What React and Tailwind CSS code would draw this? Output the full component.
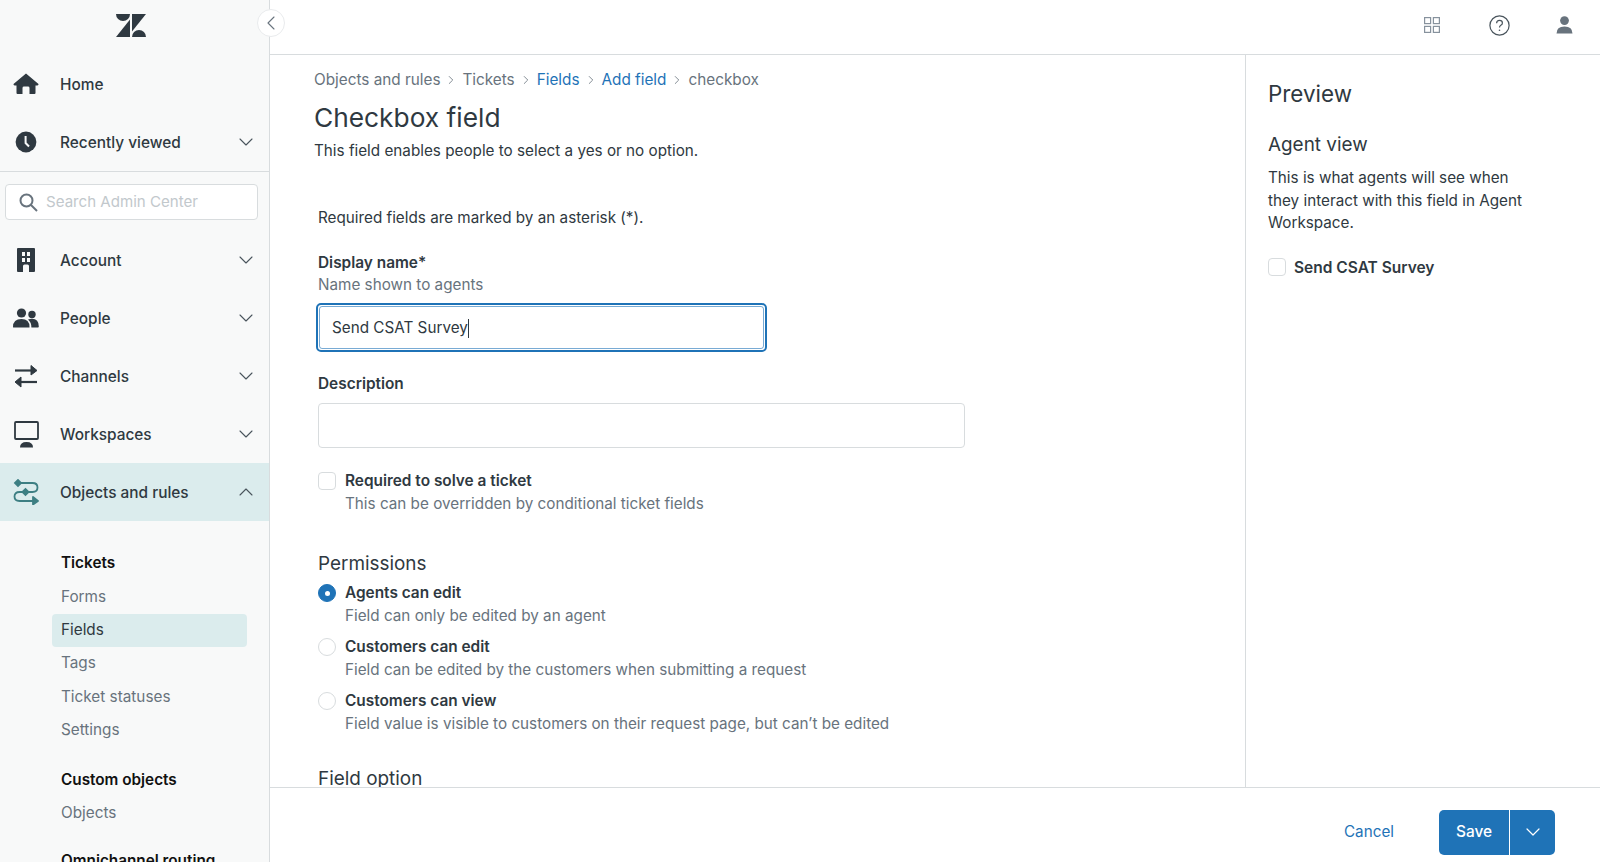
import React from 'react';
import { ChevronDown, ChevronUp, ChevronLeft, ChevronRight } from 'lucide-react';

// Iconos de la barra lateral
const HomeIcon = () => (
  <svg width="26" height="22" viewBox="0 0 26 22" fill="#2f3941">
    <path d="M13 0.5 L25.5 11 Q25.7 12.6 24 12.4 L22.5 12.4 L22.5 20 Q22.5 21 21.5 21 L16.5 21 L16.5 15 Q16.5 13.6 15 13.6 L11 13.6 Q9.5 13.6 9.5 15 L9.5 21 L4.5 21 Q3.5 21 3.5 20 L3.5 12.4 L2 12.4 Q0.3 12.6 0.5 11 Z" />
  </svg>
);
const ClockIcon = () => (
  <svg width="22" height="22" viewBox="0 0 22 22">
    <circle cx="11" cy="11" r="10.4" fill="#2f3941" />
    <path d="M10.6 5 V12 L14 15.5" fill="none" stroke="#f8f9f9" strokeWidth="2" />
  </svg>
);
const BuildingIcon = () => (
  <svg width="20" height="24" viewBox="0 0 20 24" fill="#2f3941">
    <path fillRule="evenodd" d="M1 1 Q1 0 2 0 L18 0 Q19 0 19 1 L19 23 Q19 24 18 24 L13 24 L13 18 Q13 16.5 11.5 16.5 L8.5 16.5 Q7 16.5 7 18 L7 24 L2 24 Q1 24 1 23 Z M6 4 V8 H9 V4 Z M11 4 V8 H14 V4 Z M6 10 V14 H9 V10 Z M11 10 V14 H14 V10 Z" />
  </svg>
);
const PeopleIcon = () => (
  <svg width="26" height="20" viewBox="0 0 26 20" fill="#2f3941">
    <circle cx="8.5" cy="5" r="4.6" />
    <circle cx="19" cy="6.5" r="3.7" />
    <path d="M0 19 Q0 11 8.5 11 Q16.5 11 16.5 19 L16.5 19.6 L0.8 19.6 Q0 19.6 0 19 Z" />
    <path d="M15 11.4 Q17 10.8 19 10.8 Q25.8 10.8 25.8 18.6 Q25.8 19.6 25 19.6 L18.4 19.6 Q18.6 14.4 15 11.4 Z" />
  </svg>
);
const ArrowsIcon = () => (
  <svg width="24" height="24" viewBox="0 0 24 24" fill="#2f3941" stroke="#2f3941">
    <path d="M1 6.5 H18" fill="none" strokeWidth="2.2" />
    <path d="M17 1.5 L23 6.5 L17 11 Z" strokeWidth="1" strokeLinejoin="round" />
    <path d="M23 18 H6" fill="none" strokeWidth="2.2" />
    <path d="M7 13 L1 18 L7 23 Z" strokeWidth="1" strokeLinejoin="round" />
  </svg>
);
const MonitorIcon = () => (
  <svg width="25" height="27" viewBox="0 0 25 27" fill="#2f3941">
    <rect x="1" y="1" width="23" height="17" rx="1" fill="none" stroke="#2f3941" strokeWidth="1.8" />
    <path d="M6 26.5 Q6 21 12.5 21 Q19 21 19 26.5 Z" />
  </svg>
);
const RulesIcon = () => (
  <svg width="26" height="26" viewBox="0 0 26 26" fill="none" stroke="#3d7f83" strokeWidth="1.8">
    <path d="M5 4 H19.5 Q24.5 4 24.5 8.5 Q24.5 13 19.5 13 H6.5 Q1.5 13 1.5 17.5 Q1.5 22 6.5 22 H21" />
    <path d="M2 4 L5 1 L8 4 L5 7 Z" fill="#3d7f83" />
    <path d="M9.5 13 L12.5 10 L15.5 13 L12.5 16 Z" fill="#3d7f83" />
    <path d="M20 18 L25 22 L20 25.5 Z" fill="#3d7f83" strokeLinejoin="round" />
  </svg>
);
const SearchIcon = () => (
  <svg width="19" height="19" viewBox="0 0 19 19" fill="none" stroke="#68737d" strokeWidth="2">
    <circle cx="7.5" cy="7.5" r="6" />
    <path d="M12 12 L18 18" />
  </svg>
);
const Logo = () => (
  <svg width="30" height="23" viewBox="0 0 30 23" fill="#2f3941">
    <path d="M0 0 H14 A7 7 0 0 1 0 0 Z" />
    <path d="M16 0 H30 L16 17.5 Z" />
    <path d="M14 5.5 V23 H0 Z" />
    <path d="M16 23 A7 7 0 0 1 30 23 Z" />
  </svg>
);

const NavRow = ({ icon, label, chevron, active }) => (
  <div className={`h-[58px] flex items-center shrink-0 ${active ? 'bg-[#dbeced]' : ''}`}>
    <div className="w-[52px] flex justify-center shrink-0">{icon}</div>
    <span className="ml-[8px] pt-[1px] text-[15.4px] font-medium text-[#2f3941]">{label}</span>
    {chevron === 'down' && <ChevronDown size={24} strokeWidth={1.1} className="ml-auto mr-[11px] text-[#49545c]" />}
    {chevron === 'up' && <ChevronUp size={24} strokeWidth={1.1} className="ml-auto mr-[11px] text-[#49545c]" />}
  </div>
);

const SubItem = ({ label, active }) => (
  <div
    className={`h-[33.4px] shrink-0 ml-[52px] mr-[22px] pl-[9px] flex items-center rounded text-[15.3px] ${
      active ? 'bg-[#dbeced] text-[#2f3941]' : 'text-[#68737d]'
    }`}
  >
    {label}
  </div>
);

const SubHeading = ({ label }) => (
  <div className="h-[33.4px] shrink-0 ml-[52px] pl-[9px] flex items-center text-[15.3px] font-semibold text-[#111]">{label}</div>
);

const Sidebar = () => (
  <aside className="w-[270px] shrink-0 h-full bg-[#f8f9f9] border-r border-[#d8dcde] flex flex-col overflow-hidden">
    <div className="h-[55px] shrink-0 flex items-center justify-center pb-[5px] pr-[8px]">
      <Logo />
    </div>
    <NavRow icon={<HomeIcon />} label="Home" />
    <NavRow icon={<ClockIcon />} label="Recently viewed" chevron="down" />
    <div className="border-t border-[#d8dcde] pt-[12px] pb-[11px] px-[5px] shrink-0">
      <div className="h-[36px] w-[253px] bg-white border border-[#d8dcde] rounded flex items-center pl-[13px] gap-[8px]">
        <SearchIcon />
        <span className="text-[15.1px] text-[#c2c8cc]">Search Admin Center</span>
      </div>
    </div>
    <NavRow icon={<BuildingIcon />} label="Account" chevron="down" />
    <NavRow icon={<PeopleIcon />} label="People" chevron="down" />
    <NavRow icon={<ArrowsIcon />} label="Channels" chevron="down" />
    <NavRow icon={<MonitorIcon />} label="Workspaces" chevron="down" />
    <NavRow icon={<RulesIcon />} label="Objects and rules" chevron="up" active />
    <div className="pt-[26px] flex flex-col">
      <SubHeading label="Tickets" />
      <SubItem label="Forms" />
      <SubItem label="Fields" active />
      <SubItem label="Tags" />
      <SubItem label="Ticket statuses" />
      <SubItem label="Settings" />
      <div className="h-[16px] shrink-0" />
      <SubHeading label="Custom objects" />
      <SubItem label="Objects" />
      <div className="h-[15px] shrink-0" />
      <SubHeading label="Omnichannel routing" />
    </div>
  </aside>
);

const TopBar = () => (
  <header className="h-[55px] shrink-0 border-b border-[#d8dcde] flex items-center justify-end bg-white pb-[4px]">
    <svg width="16" height="16" viewBox="0 0 16 16" fill="none" stroke="#87929d" strokeWidth="1.2" className="mr-[49px]">
      <rect x="0.6" y="0.6" width="6" height="6" />
      <rect x="9.4" y="0.6" width="6" height="6" />
      <rect x="0.6" y="9.4" width="6" height="6" />
      <rect x="9.4" y="9.4" width="6" height="6" />
    </svg>
    <svg width="21" height="21" viewBox="0 0 21 21" fill="none" stroke="#49545c" strokeWidth="1.2" className="mr-[46px]">
      <circle cx="10.5" cy="10.5" r="9.6" />
      <path d="M7.6 8.2 Q7.6 5.4 10.5 5.4 Q13.4 5.4 13.4 7.9 Q13.4 9.4 11.8 10.3 Q10.5 11 10.5 12.6" />
      <circle cx="10.5" cy="15.3" r="0.8" fill="#49545c" stroke="none" />
    </svg>
    <svg width="17" height="18" viewBox="0 0 17 18" fill="#68737d" className="mr-[27px]">
      <circle cx="8.5" cy="4.6" r="4.4" />
      <path d="M0.5 17.5 Q0.5 10.4 8.5 10.4 Q16.5 10.4 16.5 17.5 Z" />
    </svg>
  </header>
);

const Crumb = ({ children, link }) => (
  <span className={link ? 'text-[#1f73b7]' : 'text-[#68737d]'}>{children}</span>
);
const Sep = () => <ChevronRight size={14} strokeWidth={1.4} className="mx-[4px] text-[#68737d]" />;

const Option = ({ label, hint, radio, checked, className = '' }) => (
  <div className={`flex ${className}`}>
    {radio ? (
      <span
        className={`w-[18px] h-[18px] mt-[2px] rounded-full shrink-0 flex items-center justify-center border ${
          checked ? 'bg-[#1f73b7] border-[#1f73b7]' : 'bg-white border-[#d8dcde]'
        }`}
      >
        {checked && <span className="w-[5px] h-[5px] rounded-full bg-white" />}
      </span>
    ) : (
      <span className="w-[18px] h-[18px] mt-[2px] rounded-[4px] shrink-0 bg-white border border-[#d8dcde]" />
    )}
    <div className="ml-[9px]">
      <div className="text-[15.4px] leading-[22px] font-semibold text-[#2f3941]">{label}</div>
      <div className="text-[15.25px] leading-[22px] pt-[1px] mb-[-1px] text-[#68737d]">{hint}</div>
    </div>
  </div>
);

const Form = () => (
  <div className="flex-1 min-w-0 overflow-hidden pl-[44px]">
    <nav className="mt-[15px] h-[20px] flex items-center text-[15.3px]">
      <Crumb>Objects and rules</Crumb>
      <Sep />
      <Crumb>Tickets</Crumb>
      <Sep />
      <Crumb link>Fields</Crumb>
      <Sep />
      <Crumb link>Add field</Crumb>
      <Sep />
      <Crumb>checkbox</Crumb>
    </nav>
    <h1 className="mt-[10px] text-[26.3px] leading-[36px] text-[#2f3941]">Checkbox field</h1>
    <p className="mt-[4px] text-[15.25px] leading-[22px] text-[#2f3941]">This field enables people to select a yes or no option.</p>

    <div className="pl-[4px]">
      <p className="mt-[45px] text-[15.25px] leading-[22px] text-[#2f3941]">Required fields are marked by an asterisk (*).</p>
      <div className="mt-[23px] text-[15.4px] leading-[22px] font-semibold text-[#2f3941]">Display name*</div>
      <div className="text-[15.25px] leading-[22px] text-[#68737d]">Name shown to agents</div>
      <div className="mt-[7px] ml-[-2px] w-[451px] h-[49px] rounded-[5px] border-[2px] border-[#1f73b7] p-[1px]">
        <div className="w-full h-full rounded-[3px] border border-[#1f73b7]/60 pl-[12px] pt-[1px] flex items-center text-[15.25px] text-[#2f3941]">
          Send CSAT Survey<span className="w-px h-[19px] bg-[#2f3941]" />
        </div>
      </div>
      <div className="mt-[21px] text-[15.4px] leading-[22px] font-semibold text-[#2f3941]">Description</div>
      <div className="mt-[8px] w-[647px] h-[45px] rounded border border-[#d8dcde] bg-white" />
      <Option className="mt-[22px]" label="Required to solve a ticket" hint="This can be overridden by conditional ticket fields" />
      <h2 className="mt-[36px] text-[18.9px] leading-[28px] text-[#2f3941]">Permissions</h2>
      <Option className="mt-[4px]" radio checked label="Agents can edit" hint="Field can only be edited by an agent" />
      <Option className="mt-[10px]" radio label="Customers can edit" hint="Field can be edited by the customers when submitting a request" />
      <Option className="mt-[10px]" radio label="Customers can view" hint="Field value is visible to customers on their request page, but can’t be edited" />
      <h2 className="mt-[31px] text-[18.9px] leading-[28px] text-[#2f3941]">Field option</h2>
    </div>
  </div>
);

const Preview = () => (
  <aside className="w-[355px] shrink-0 border-l border-[#d8dcde] pl-[22px] pr-[67px] overflow-hidden">
    <h2 className="mt-[23px] text-[22.4px] leading-[32px] text-[#2f3941]">Preview</h2>
    <h3 className="mt-[21px] text-[18.9px] leading-[28px] text-[#2f3941]">Agent view</h3>
    <p className="mt-[8px] text-[15.25px] leading-[22.5px] text-[#2f3941]">
      This is what agents will see when they interact with this field in Agent Workspace.
    </p>
    <div className="mt-[21px] flex items-center">
      <span className="w-[18px] h-[18px] rounded-[4px] border border-[#d8dcde] bg-white shrink-0" />
      <span className="ml-[8px] text-[15.5px] font-semibold text-[#2f3941]">Send CSAT Survey</span>
    </div>
  </aside>
);

const Footer = () => (
  <footer className="h-[75px] shrink-0 border-t border-[#d8dcde] bg-white flex items-center justify-end pr-[45px] pt-[14px]">
    <span className="text-[15.25px] text-[#1f73b7] mr-[45px]">Cancel</span>
    <div className="flex h-[45px] text-white">
      <div className="w-[70px] bg-[#1f73b7] rounded-l-[5px] flex items-center justify-center text-[15.4px] font-medium">Save</div>
      <div className="w-[45px] ml-px bg-[#1f73b7] rounded-r-[5px] flex items-center justify-center">
        <ChevronDown size={24} strokeWidth={1.2} />
      </div>
    </div>
  </footer>
);

export default function App() {
  return (
    <div className="relative h-screen w-full flex overflow-hidden bg-white font-['Inter',sans-serif]">
      <Sidebar />
      <main className="flex-1 min-w-0 flex flex-col h-full">
        <TopBar />
        <div className="flex-1 min-h-0 flex">
          <Form />
          <Preview />
        </div>
        <Footer />
      </main>
      {/* Botón redondo para colapsar, encima del borde de la barra */}
      <button className="absolute left-[257px] top-[9px] w-[28px] h-[28px] rounded-full bg-white border border-[#e9ebed] flex items-center justify-center text-[#68737d]">
        <ChevronLeft size={24} strokeWidth={1.1} />
      </button>
    </div>
  );
}
